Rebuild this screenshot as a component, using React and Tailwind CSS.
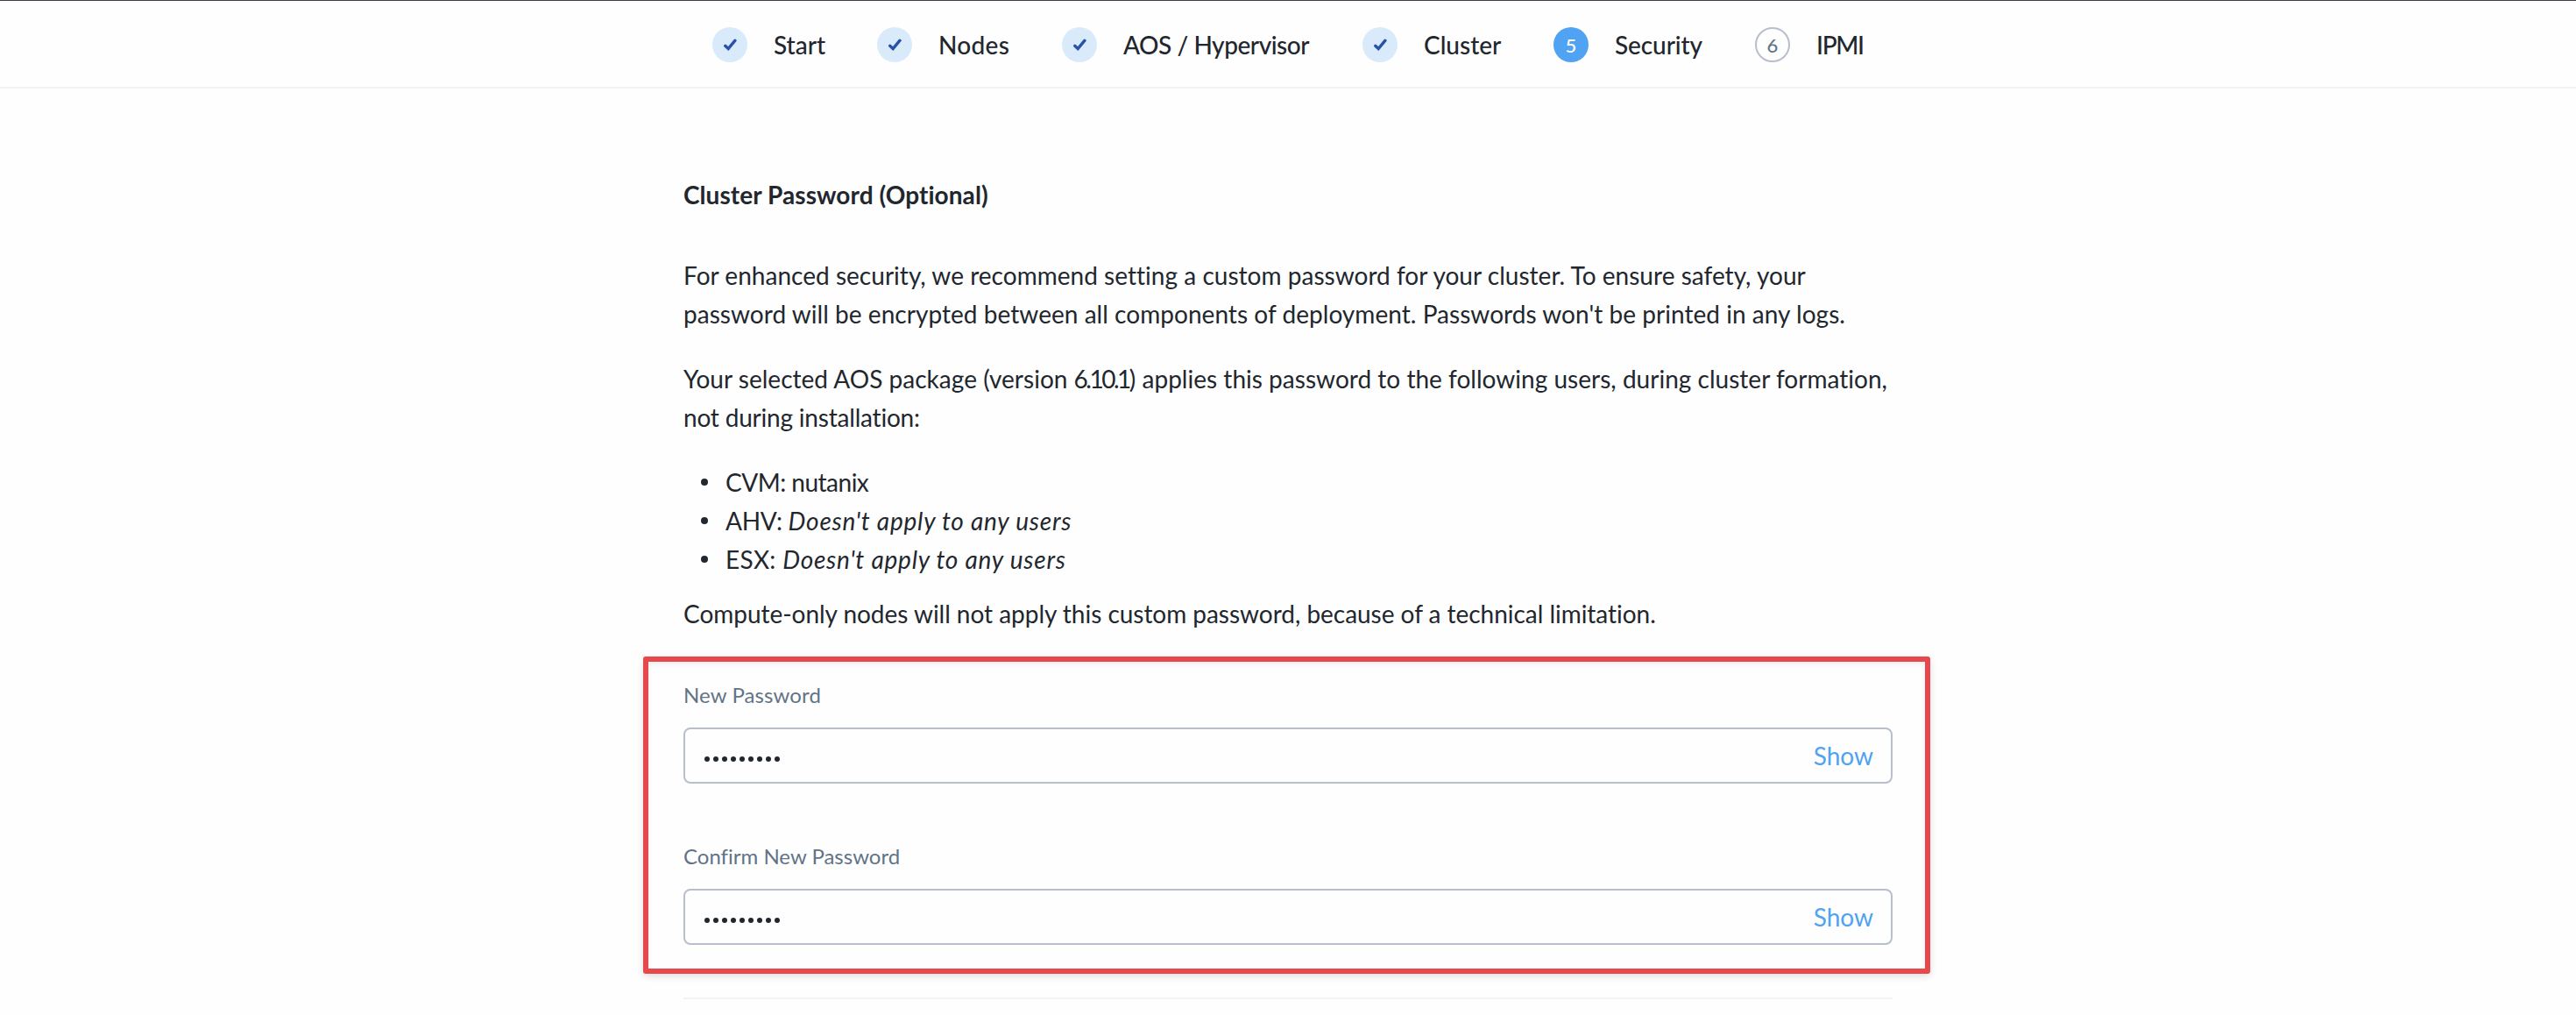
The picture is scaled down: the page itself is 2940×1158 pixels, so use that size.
const steps = [
  { label: "Start", state: "done", width: "w-[58px]", tracking: "tracking-normal" },
  { label: "Nodes", state: "done", width: "w-[81px]", tracking: "tracking-[0.3px]" },
  { label: "AOS / Hypervisor", state: "done", width: "w-[213px]", tracking: "tracking-[-0.45px]" },
  { label: "Cluster", state: "done", width: "w-[88px]", tracking: "tracking-normal" },
  { label: "Security", state: "active", width: "w-[100px]", tracking: "tracking-[-0.1px]" },
  { label: "IPMI", state: "todo", width: "w-[56px]", tracking: "tracking-[-1.3px]" },
];

function StepMarker({ state, number }) {
  if (state === "done") {
    return (
      <span className="size-10 shrink-0 rounded-full bg-[#d9ebfb]">
        <svg viewBox="0 0 40 40" className="size-10" fill="none" stroke="#2754a6" strokeWidth="3.4" strokeLinecap="round" strokeLinejoin="miter">
          <path d="M14.7 21.3L18.2 24.5L26 15.2" />
        </svg>
      </span>
    );
  }
  if (state === "active") {
    return (
      <span className="size-10 shrink-0 rounded-full bg-[#50a3f2] text-center text-[22px] leading-[41px] font-medium text-white">
        {number}
      </span>
    );
  }
  return (
    <span className="size-10 shrink-0 rounded-full border-2 border-[#b8becc] text-center text-[22px] leading-[37px] font-medium text-[#627386]">
      {number}
    </span>
  );
}

function Bullet({ children }) {
  return (
    <li className="flex">
      <span className="mt-[18px] mr-[20px] ml-[20px] size-2 shrink-0 rounded-full bg-[#22272e]" />
      <span className="whitespace-pre">{children}</span>
    </li>
  );
}

function PasswordField({ label, tracking }) {
  return (
    <div>
      <div className={`text-[24px] leading-8 text-[#627386] ${tracking}`}>{label}</div>
      <div className="mt-[21px] flex h-16 items-center justify-between rounded-lg border-2 border-[#b8becc] bg-[#fefefe] pr-[20px] pl-[22px]">
        <div className="flex gap-1 pt-2">
          {Array.from({ length: 9 }, (_, i) => (
            <span key={i} className="size-1.5 rounded-full bg-[#22272e]" />
          ))}
        </div>
        <button type="button" className="text-[28px] leading-[44px] text-[#50a3f2]">Show</button>
      </div>
    </div>
  );
}

export default function App() {
  return (
    <div className="min-h-[1158px] w-full bg-[#fefefe] font-['Lato','Open_Sans',sans-serif] text-[28px] leading-[44px] text-[#22272e] [font-variant-ligatures:none]">
      <header className="h-[101px] border-t border-b-2 border-t-[#3c3f4b] border-b-[#f3f3f5] pt-[2px] pl-[813px]">
        <ol className="flex h-full items-center gap-[60px]">
          {steps.map((step, i) => (
            <li key={step.label} className="flex items-center gap-[30px]">
              <StepMarker state={step.state} number={i + 1} />
              <span className={`font-medium whitespace-nowrap ${step.width} ${step.tracking}`}>{step.label}</span>
            </li>
          ))}
        </ol>
      </header>

      <main className="mx-auto w-[1380px] pt-[99px]">
        <h1 className="font-bold tracking-[0.07px]">Cluster Password (Optional)</h1>

        <p className="mt-12 whitespace-nowrap">
          <span className="tracking-[0.025px]">
            For enhanced security, we recommend setting a custom password for your cluster. To ensure safety, your
          </span>
          <br />
          <span className="tracking-[0.04px]">
            password will be encrypted between all components of deployment. Passwords won't be printed in any logs.
          </span>
        </p>

        <p className="mt-[30px] tracking-[0.02px] whitespace-nowrap">
          Your selected AOS package (version <span className="tracking-[-2.5px]">6.10.1</span>) applies this password to
          the following users, during cluster formation,
          <br />
          <span className="tracking-[-0.2px]">not during installation:</span>
        </p>

        <ul className="mt-[30px]">
          <Bullet>
            <span className="tracking-[-0.5px]">CVM: nutanix</span>
          </Bullet>
          <Bullet>
            <span className="tracking-[-0.3px]">AHV: </span>
            <em className="tracking-[0.78px]">Doesn't apply to any users</em>
          </Bullet>
          <Bullet>
            <span className="tracking-[0.3px]">ESX: </span>
            <em className="tracking-[0.78px]">Doesn't apply to any users</em>
          </Bullet>
        </ul>

        <p className="mt-[18px] tracking-[-0.03px] whitespace-nowrap">
          Compute-only nodes will not apply this custom password, because of a technical limitation.
        </p>

        <section className="mt-[27px] -mr-[43px] -ml-[46px] flex flex-col gap-[67px] rounded-[3px] border-6 border-[#e6484b] pt-[22px] pr-[37px] pb-[27px] pl-[40px] shadow-[0_3px_8px_rgba(0,0,0,0.12),inset_0_3px_6px_rgba(0,0,0,0.06)]">
          <PasswordField label="New Password" tracking="tracking-[0.1px]" />
          <PasswordField label="Confirm New Password" tracking="tracking-normal" />
        </section>

        <hr className="mt-[27px] border-0 border-t-2 border-[#f3f3f5]" />
      </main>
    </div>
  );
}
